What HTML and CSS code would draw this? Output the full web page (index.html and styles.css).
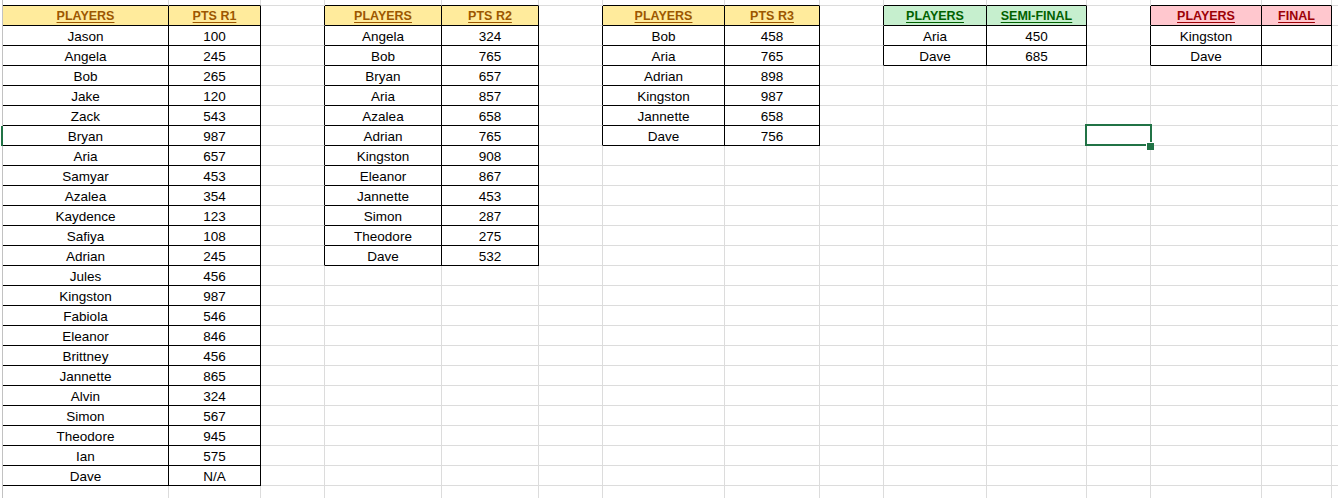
FILE: index.html
```html
<!DOCTYPE html>
<html>
<head>
<meta charset="utf-8">
<title>Tournament</title>
<link rel="stylesheet" href="styles.css">
</head>
<body>
<div class="sheet">
  <div class="row top"><div class="g"></div><div class="ab"></div><div class="ab"></div><div></div><div class="ab"></div><div class="ab"></div><div></div><div class="ab"></div><div class="ab"></div><div></div><div class="ab"></div><div class="ab"></div><div></div><div class="ab"></div><div class="ab"></div><div></div></div>
  <div class="row"><div class="g"></div><div class="t hy"><span>PLAYERS</span></div><div class="t hy"><span>PTS R1</span></div><div class="lt"></div><div class="t hy"><span>PLAYERS</span></div><div class="t hy"><span>PTS R2</span></div><div class="lt"></div><div class="t hy"><span>PLAYERS</span></div><div class="t hy"><span>PTS R3</span></div><div class="lt"></div><div class="t hg"><span>PLAYERS</span></div><div class="t hg"><span>SEMI-FINAL</span></div><div class="lt"></div><div class="t hr"><span>PLAYERS</span></div><div class="t hr"><span>FINAL</span></div><div></div></div>
  <div class="row"><div class="g"></div><div class="t">Jason</div><div class="t">100</div><div class="lt"></div><div class="t">Angela</div><div class="t">324</div><div class="lt"></div><div class="t">Bob</div><div class="t">458</div><div class="lt"></div><div class="t">Aria</div><div class="t">450</div><div class="lt"></div><div class="t">Kingston</div><div class="t"></div><div></div></div>
  <div class="row"><div class="g"></div><div class="t">Angela</div><div class="t">245</div><div class="lt"></div><div class="t">Bob</div><div class="t">765</div><div class="lt"></div><div class="t">Aria</div><div class="t">765</div><div class="lt"></div><div class="t">Dave</div><div class="t">685</div><div class="lt"></div><div class="t">Dave</div><div class="t"></div><div></div></div>
  <div class="row"><div class="g"></div><div class="t">Bob</div><div class="t">265</div><div class="lt"></div><div class="t">Bryan</div><div class="t">657</div><div class="lt"></div><div class="t">Adrian</div><div class="t">898</div><div></div><div></div><div></div><div></div><div></div><div></div><div></div></div>
  <div class="row"><div class="g"></div><div class="t">Jake</div><div class="t">120</div><div class="lt"></div><div class="t">Aria</div><div class="t">857</div><div class="lt"></div><div class="t">Kingston</div><div class="t">987</div><div></div><div></div><div></div><div></div><div></div><div></div><div></div></div>
  <div class="row"><div class="g"></div><div class="t">Zack</div><div class="t">543</div><div class="lt"></div><div class="t">Azalea</div><div class="t">658</div><div class="lt"></div><div class="t">Jannette</div><div class="t">658</div><div></div><div></div><div></div><div></div><div></div><div></div><div></div></div>
  <div class="row"><div class="g on"></div><div class="t">Bryan</div><div class="t">987</div><div class="lt"></div><div class="t">Adrian</div><div class="t">765</div><div class="lt"></div><div class="t">Dave</div><div class="t">756</div><div></div><div></div><div></div><div></div><div></div><div></div><div></div></div>
  <div class="row"><div class="g"></div><div class="t">Aria</div><div class="t">657</div><div class="lt"></div><div class="t">Kingston</div><div class="t">908</div><div></div><div></div><div></div><div></div><div></div><div></div><div></div><div></div><div></div><div></div></div>
  <div class="row"><div class="g"></div><div class="t">Samyar</div><div class="t">453</div><div class="lt"></div><div class="t">Eleanor</div><div class="t">867</div><div></div><div></div><div></div><div></div><div></div><div></div><div></div><div></div><div></div><div></div></div>
  <div class="row"><div class="g"></div><div class="t">Azalea</div><div class="t">354</div><div class="lt"></div><div class="t">Jannette</div><div class="t">453</div><div></div><div></div><div></div><div></div><div></div><div></div><div></div><div></div><div></div><div></div></div>
  <div class="row"><div class="g"></div><div class="t">Kaydence</div><div class="t">123</div><div class="lt"></div><div class="t">Simon</div><div class="t">287</div><div></div><div></div><div></div><div></div><div></div><div></div><div></div><div></div><div></div><div></div></div>
  <div class="row"><div class="g"></div><div class="t">Safiya</div><div class="t">108</div><div class="lt"></div><div class="t">Theodore</div><div class="t">275</div><div></div><div></div><div></div><div></div><div></div><div></div><div></div><div></div><div></div><div></div></div>
  <div class="row"><div class="g"></div><div class="t">Adrian</div><div class="t">245</div><div class="lt"></div><div class="t">Dave</div><div class="t">532</div><div></div><div></div><div></div><div></div><div></div><div></div><div></div><div></div><div></div><div></div></div>
  <div class="row"><div class="g"></div><div class="t">Jules</div><div class="t">456</div><div></div><div></div><div></div><div></div><div></div><div></div><div></div><div></div><div></div><div></div><div></div><div></div><div></div></div>
  <div class="row"><div class="g"></div><div class="t">Kingston</div><div class="t">987</div><div></div><div></div><div></div><div></div><div></div><div></div><div></div><div></div><div></div><div></div><div></div><div></div><div></div></div>
  <div class="row"><div class="g"></div><div class="t">Fabiola</div><div class="t">546</div><div></div><div></div><div></div><div></div><div></div><div></div><div></div><div></div><div></div><div></div><div></div><div></div><div></div></div>
  <div class="row"><div class="g"></div><div class="t">Eleanor</div><div class="t">846</div><div></div><div></div><div></div><div></div><div></div><div></div><div></div><div></div><div></div><div></div><div></div><div></div><div></div></div>
  <div class="row"><div class="g"></div><div class="t">Brittney</div><div class="t">456</div><div></div><div></div><div></div><div></div><div></div><div></div><div></div><div></div><div></div><div></div><div></div><div></div><div></div></div>
  <div class="row"><div class="g"></div><div class="t">Jannette</div><div class="t">865</div><div></div><div></div><div></div><div></div><div></div><div></div><div></div><div></div><div></div><div></div><div></div><div></div><div></div></div>
  <div class="row"><div class="g"></div><div class="t">Alvin</div><div class="t">324</div><div></div><div></div><div></div><div></div><div></div><div></div><div></div><div></div><div></div><div></div><div></div><div></div><div></div></div>
  <div class="row"><div class="g"></div><div class="t">Simon</div><div class="t">567</div><div></div><div></div><div></div><div></div><div></div><div></div><div></div><div></div><div></div><div></div><div></div><div></div><div></div></div>
  <div class="row"><div class="g"></div><div class="t">Theodore</div><div class="t">945</div><div></div><div></div><div></div><div></div><div></div><div></div><div></div><div></div><div></div><div></div><div></div><div></div><div></div></div>
  <div class="row"><div class="g"></div><div class="t">Ian</div><div class="t">575</div><div></div><div></div><div></div><div></div><div></div><div></div><div></div><div></div><div></div><div></div><div></div><div></div><div></div></div>
  <div class="row"><div class="g"></div><div class="t">Dave</div><div class="t">N/A</div><div></div><div></div><div></div><div></div><div></div><div></div><div></div><div></div><div></div><div></div><div></div><div></div><div></div></div>
  <div class="row"><div class="g"></div><div></div><div></div><div></div><div></div><div></div><div></div><div></div><div></div><div></div><div></div><div></div><div></div><div></div><div></div><div></div></div>
  <div class="selection"></div>
</div>
</body>
</html>
```

FILE: styles.css
```css
* { box-sizing: border-box; }

html, body {
  margin: 0;
  padding: 0;
  background: #ffffff;
  overflow: hidden;
}

body {
  width: 1338px;
  height: 498px;
  font-family: "Liberation Sans", Arial, sans-serif;
  font-size: 13.5px;
  color: #000000;
}

.sheet {
  position: relative;
  width: 1338px;
  height: 498px;
  overflow: hidden;
}

.row {
  display: grid;
  grid-template-columns: 3px 166px 92px 64px 117px 97px 64px 122px 95px 64px 103px 100px 64px 111px 70px 64px;
  height: 20px;
}

.row.top { height: 6px; }

.row > div {
  border-right: 1px solid #dcdcdc;
  border-bottom: 1px solid #dcdcdc;
  padding-top: 2px;
  line-height: 17px;
  text-align: center;
  white-space: nowrap;
  overflow: hidden;
}

.row > .g {
  border-bottom: 0;
  border-right-color: #c2c2c2;
}

.row > .g.on {
  border-right-color: #217346;
  box-shadow: inset -1px 0 #217346;
}

.row > .t {
  border-right-color: #000000;
  border-bottom-color: #000000;
}

.row > .ab { border-bottom-color: #000000; }
.row > .lt { border-right-color: #000000; }

.row > .hy,
.row > .hg,
.row > .hr {
  font-weight: bold;
  font-size: 12.5px;
  line-height: 17px;
  padding-top: 2px;
  text-decoration: underline;
  text-decoration-thickness: 1px;
  text-underline-offset: 2px;
}

.row > .hy { background: #ffeb9c; color: #9c5700; }
.row > .hg { background: #c6efce; color: #006100; }
.row > .hr { background: #ffc7ce; color: #9c0006; }

.selection {
  position: absolute;
  left: 1085px;
  top: 124px;
  width: 67px;
  height: 22px;
  border: 2px solid #217346;
}

.selection::after {
  content: "";
  position: absolute;
  left: 59px;
  top: 16px;
  width: 7px;
  height: 7px;
  background: #217346;
  border-left: 1px solid #ffffff;
  border-top: 1px solid #ffffff;
}
```
